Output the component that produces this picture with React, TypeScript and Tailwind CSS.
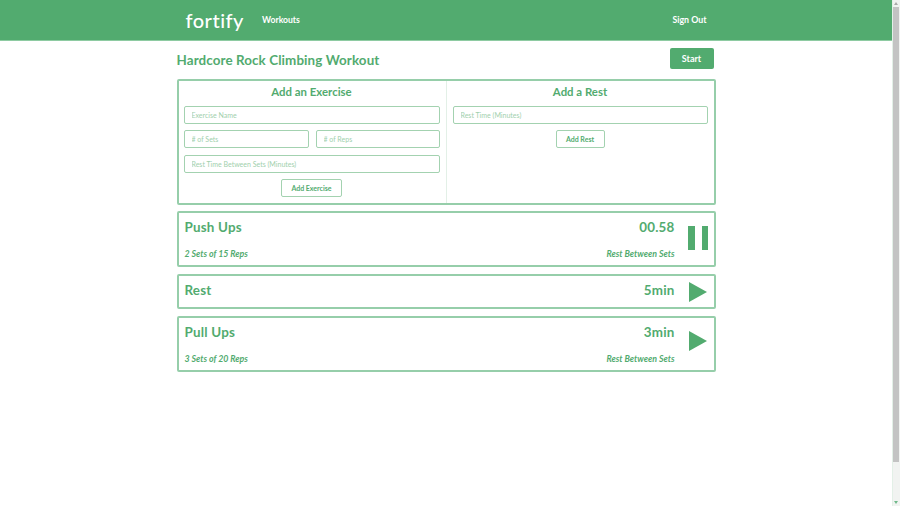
const inputCls =
  "h-[18px] min-w-0 rounded-[2px] border border-[#a3d2b0] bg-white px-[7px] text-[7px] text-[#52ab6f] placeholder:text-[#9fd0ad] outline-none";

function Field({ placeholder, className = "" }: { placeholder: string; className?: string }) {
  return <input placeholder={placeholder} className={`${inputCls} ${className}`} />;
}

function Pause() {
  return (
    <svg width="20" height="24" viewBox="0 0 20 24" className="fill-[#52ab6f]">
      <rect x="0" y="0" width="7" height="24" />
      <rect x="14" y="0" width="6" height="24" />
    </svg>
  );
}

function Play() {
  return (
    <svg width="18" height="20" viewBox="0 0 18 20" className="fill-[#52ab6f]">
      <polygon points="0,0 18,10 0,20" />
    </svg>
  );
}

type Item = {
  name: string;
  time: string;
  sets?: string;
  playing?: boolean;
};

const ITEMS: Item[] = [
  { name: "Push Ups", time: "00.58", sets: "2 Sets of 15 Reps", playing: true },
  { name: "Rest", time: "5min" },
  { name: "Pull Ups", time: "3min", sets: "3 Sets of 20 Reps" },
];

function ExerciseRow({ item }: { item: Item }) {
  return (
    <div className={`flex rounded-[2px] border-2 border-[#96ceaa] px-[6px] ${item.sets ? "h-[56px]" : "h-[35px]"}`}>
      <div className="flex flex-1 flex-col">
        <div className="flex items-center justify-between pt-[5px]">
          <span className="text-[13.4px] font-bold leading-[18px] tracking-[0.2px]">{item.name}</span>
          <span className="mr-[5px] text-[13.4px] font-bold leading-[18px] tracking-[0.2px]">{item.time}</span>
        </div>
        {item.sets && (
          <div className="mt-[12px] flex items-center justify-between pr-[5px] text-[8.8px] font-bold italic leading-[12px]">
            <span>{item.sets}</span>
            <span>Rest Between Sets</span>
          </div>
        )}
      </div>
      <div className={`ml-[8px] flex w-[20px] justify-center ${item.sets ? "mt-[13px]" : "mt-[6px]"}`}>
        {item.playing ? (
          <Pause />
        ) : (
          <div className="h-[20px]">
            <Play />
          </div>
        )}
      </div>
    </div>
  );
}

export default function App() {
  return (
    <div className="flex h-[506px] overflow-hidden bg-white font-['Lato',sans-serif] text-[#52ab6f]">
      <div className="flex min-w-0 flex-1 flex-col">
        {/* Navbar */}
        <nav className="h-[41px] shrink-0 border-b border-[#8ecba2] bg-[#52ab6f] text-white">
          <div className="mx-auto flex h-full w-[539px] items-center px-[9px]">
            <span className="text-[20px] font-medium leading-none tracking-[0.5px]">fortify</span>
            <span className="ml-[18px] text-[8.6px] font-bold">Workouts</span>
            <span className="ml-auto text-[8.8px] font-bold">Sign Out</span>
          </div>
        </nav>

        <main className="mx-auto w-[539px]">
          <div className="flex h-[38px] items-start justify-between pr-[2px]">
            <h1 className="mt-[9px] text-[13.4px] font-bold leading-[20px] tracking-[0.1px]">
              Hardcore Rock Climbing Workout
            </h1>
            <button className="mt-[7px] h-[21px] w-[44px] rounded-[2px] bg-[#52ab6f] text-[9px] font-bold text-white">
              Start
            </button>
          </div>

          {/* Add forms */}
          <div className="flex h-[126px] rounded-[2px] border-2 border-[#96ceaa]">
            <section className="flex w-[268px] flex-col border-r border-[#e3f0e7] pl-[5px] pr-[6px]">
              <h2 className="mb-[7px] mt-[4px] text-center text-[11.4px] font-bold leading-[14px]">Add an Exercise</h2>
              <Field placeholder="Exercise Name" />
              <div className="mt-[6px] grid grid-cols-[125px_124px] gap-[7px]">
                <Field placeholder="# of Sets" />
                <Field placeholder="# of Reps" />
              </div>
              <Field placeholder="Rest Time Between Sets (Minutes)" className="mt-[7px]" />
              <button className="mx-auto mt-[6px] h-[18px] w-[61px] rounded-[2px] border border-[#a3d2b0] text-[7px] font-bold">
                Add Exercise
              </button>
            </section>
            <section className="flex flex-1 flex-col px-[6px]">
              <h2 className="mb-[7px] mt-[4px] text-center text-[11.4px] font-bold leading-[14px]">Add a Rest</h2>
              <Field placeholder="Rest Time (Minutes)" />
              <button className="mx-auto mt-[6px] h-[18px] w-[49px] rounded-[2px] border border-[#a3d2b0] text-[7px] font-bold">
                Add Rest
              </button>
            </section>
          </div>

          <div className="mt-[6px] flex flex-col gap-[7px]">
            {ITEMS.map((item) => (
              <ExerciseRow key={item.name} item={item} />
            ))}
          </div>
        </main>
      </div>

      {/* Scrollbar */}
      <div className="flex w-[8px] shrink-0 flex-col border-l border-[#e3f0e7] bg-[#f1f3f1] pr-[1px]">
        <div className="flex h-[7px] shrink-0 items-center justify-center">
          <svg width="4" height="3" viewBox="0 0 4 3" className="fill-[#a9a9a9]">
            <polygon points="2,0 4,3 0,3" />
          </svg>
        </div>
        <div className="h-[455px] w-full bg-[#c3c3c3]" />
        <div className="mt-auto flex h-[7px] shrink-0 items-center justify-center">
          <svg width="4" height="3" viewBox="0 0 4 3" className="fill-[#6fb98a]">
            <polygon points="0,0 4,0 2,3" />
          </svg>
        </div>
      </div>
    </div>
  );
}
